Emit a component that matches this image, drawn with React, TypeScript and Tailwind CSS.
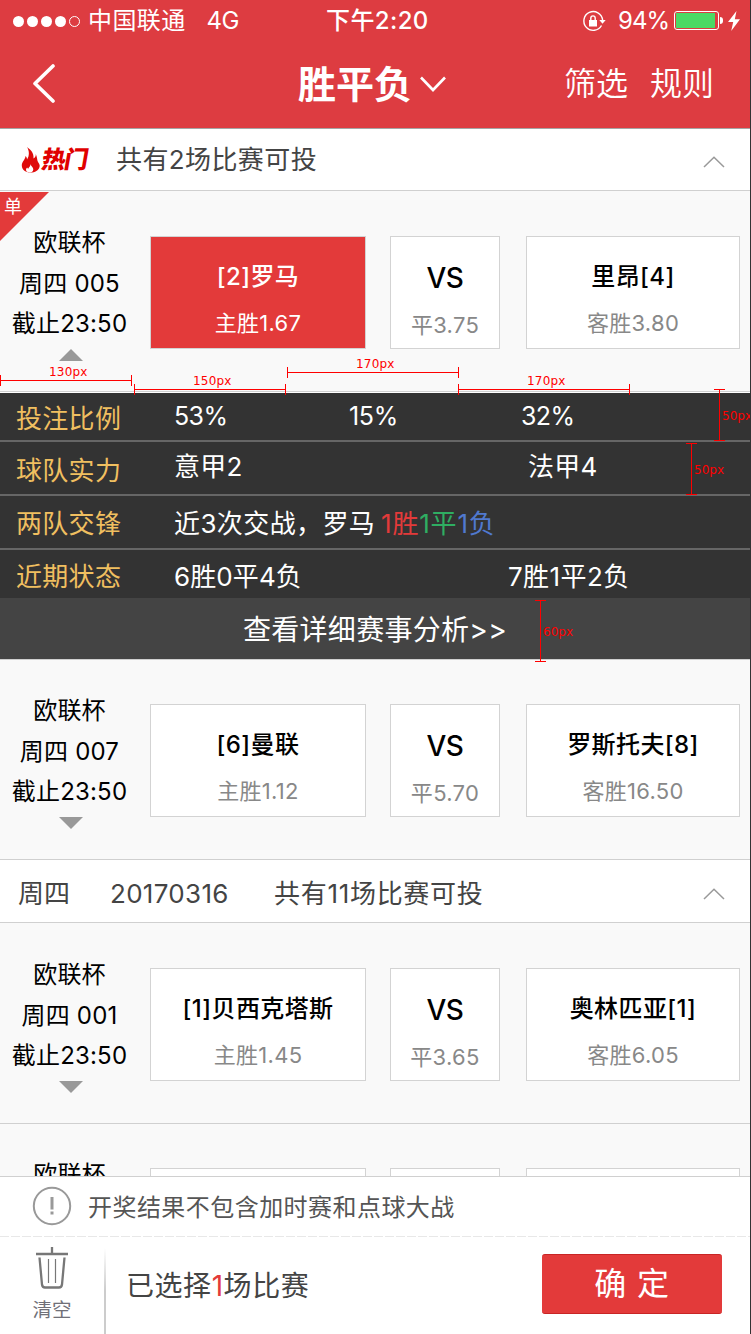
import type { ReactNode } from "react";

type Match = {
  league: string;
  code?: string;
  deadline?: string;
  home?: string;
  homeOdds?: string;
  draw?: string;
  away?: string;
  awayOdds?: string;
  open?: boolean;
  single?: boolean;
};

const hotOpen: Match = { league: "欧联杯", code: "周四 005", deadline: "截止23:50", home: "[2]罗马", homeOdds: "主胜1.67", draw: "平3.75", away: "里昂[4]", awayOdds: "客胜3.80", open: true, single: true };
const hotSecond: Match = { league: "欧联杯", code: "周四 007", deadline: "截止23:50", home: "[6]曼联", homeOdds: "主胜1.12", draw: "平5.70", away: "罗斯托夫[8]", awayOdds: "客胜16.50" };
const thursdayFirst: Match = { league: "欧联杯", code: "周四 001", deadline: "截止23:50", home: "[1]贝西克塔斯", homeOdds: "主胜1.45", draw: "平3.65", away: "奥林匹亚[1]", awayOdds: "客胜6.05" };
const thursdaySecond: Match = { league: "欧联杯" };

function StatusBar() {
  return (
    <div className="grid h-10 grid-cols-[326px_254px_1fr] items-center text-[24px] leading-10">
      <div className="flex items-center pl-[13px]">
        <div className="flex gap-[3px] pt-px">
          <i className="size-[11px] rounded-full bg-white" />
          <i className="size-[11px] rounded-full bg-white" />
          <i className="size-[11px] rounded-full bg-white" />
          <i className="size-[11px] rounded-full bg-white" />
          <i className="size-[11px] rounded-full border border-white" />
        </div>
        <span className="ml-[8px] pt-px tracking-[0.4px]">中国联通</span>
        <span className="ml-[21px] pt-px tracking-[-0.6px]">4G</span>
      </div>
      <div className="pt-px font-medium tracking-[0.4px]">下午2:20</div>
      <div className="flex items-center">
        <svg className="ml-[2px] h-6 w-6" viewBox="0 0 24 24" fill="none" stroke="white" strokeWidth="1.4">
          <path d="M19.500 16.500A9.400 9.400 0 1 1 20.600 11" />
          <path d="M17.300 11h6.400l-3.200 3.800z" fill="white" stroke="none" />
          <rect x="7" y="11" width="8" height="6.500" fill="white" stroke="none" />
          <path d="M8.800 11.500V9.100a2.200 2.200 0 0 1 4.400 0v2.400" />
        </svg>
        <span className="ml-[12px] w-[50px] pt-px tracking-[-1px]">94%</span>
        <div className="ml-[6px] h-[19px] w-[45px] shrink-0 rounded-[3px] border border-white p-px">
          <div className="h-full w-[39px] bg-[#4cd964]" />
        </div>
        <i className="ml-px h-[7px] w-[3px] rounded-r-full bg-white" />
        <svg className="ml-[5px] h-5 w-3" viewBox="0 0 12 20" fill="white">
          <path d="M8.500 0 0 11h5.200L3.200 20 12 8.300H6.800z" />
        </svg>
      </div>
    </div>
  );
}

function Header() {
  return (
    <header className="h-[129px] border-b border-[#a5a5a5] bg-[#dd3c41] text-white">
      <StatusBar />
      <div className="flex h-[88px] items-center">
        <svg className="ml-[32px] h-10 w-6" viewBox="0 0 24 40" fill="none" stroke="white" strokeWidth="3.600" strokeLinecap="round" strokeLinejoin="round">
          <path d="M21 2 3 19.500 21 37" />
        </svg>
        <h1 className="ml-[242px] text-[38px] leading-[88px] font-bold">胜平负</h1>
        <svg className="ml-[8px] h-4 w-[26px]" viewBox="0 0 26 16" fill="none" stroke="white" strokeWidth="2.600">
          <path d="M1 1.500 13 14 25 1.500" />
        </svg>
        <span className="ml-[118px] text-[32px] font-[350]">筛选</span>
        <span className="ml-[22px] text-[32px] font-[350]">规则</span>
      </div>
    </header>
  );
}

function Chevron({ shift }: { shift: string }) {
  return (
    <svg className={`mr-[25px] ml-auto h-3 w-[22px] ${shift}`} viewBox="0 0 22 12" fill="none" stroke="#999" strokeWidth="1.500">
      <path d="M1 11 11 1.200 21 11" />
    </svg>
  );
}

function Pick({ width, name, odds, selected, draw }: { width: string; name?: string; odds?: string; selected?: boolean; draw?: boolean }) {
  return (
    <div className={`${width} h-[113px] shrink-0 border border-[#d3d3d3] text-center whitespace-nowrap ${selected ? "bg-[#e33a3a] text-white" : "bg-white text-black"}`}>
      <div className={`h-[42px] leading-[42px] font-medium ${draw ? "mt-[20px] text-[28px] tracking-[-0.5px]" : "mt-[19px] text-[24px] tracking-[0.4px]"}`}>{name}</div>
      <div className={`text-[22px] leading-[44px] tracking-[0.3px] ${draw ? "mt-[4px]" : "mt-[3px]"} ${selected ? "" : "text-[#888]"}`}>{odds}</div>
    </div>
  );
}

function MatchRow({ match, line }: { match: Match; line?: boolean }) {
  return (
    <section className={`relative flex h-[200px] shrink-0 bg-[#f9f9f9] ${line ? "border-t border-[#d0d0d0] pt-[44px]" : "pt-[45px]"}`}>
      {match.single && (
        <div className="absolute top-px left-0 h-[49px] w-[49px] bg-[#e33a3a] text-white [clip-path:polygon(0_0,100%_0,0_100%)]">
          <span className="block pl-[4px] text-[18px] leading-[29px]">单</span>
        </div>
      )}
      <div className="-mt-[13px] flex w-[139px] flex-col items-center text-[24px] leading-[40.7px] tracking-[0.2px] whitespace-nowrap text-black">
        <div>{match.league}</div>
        {match.code && <div>{match.code}</div>}
        {match.deadline && <div>{match.deadline}</div>}
        {match.deadline && (
          <svg className={`mt-[4px] ml-[3px] h-3 w-6 ${match.open ? "" : "rotate-180"}`} viewBox="0 0 24 12" fill="#999">
            <path d="M12 0 24 12H0z" />
          </svg>
        )}
      </div>
      <div className="ml-[11px] flex gap-[24px]">
        <Pick width="w-[216px]" name={match.home} odds={match.homeOdds} selected={match.open} />
        <Pick width="w-[110px]" name={match.draw && "VS"} odds={match.draw} draw />
        <div className="ml-[2px]">
          <Pick width="w-[214px]" name={match.away} odds={match.awayOdds} />
        </div>
      </div>
    </section>
  );
}

function StatRow({ label, size, children }: { label: string; size: string; children: ReactNode }) {
  return (
    <div className={`${size} flex items-center border-[#666] pl-4 text-[26px] leading-[44px] whitespace-nowrap`}>
      <div className="w-[158px] shrink-0 tracking-[0.3px] text-[#f0bf60]">{label}</div>
      {children}
    </div>
  );
}

function Analysis() {
  return (
    <div className="shrink-0 border-t border-[#d0d0d0] bg-[#333] text-white">
      <div className="h-px bg-white" />
      <StatRow label="投注比例" size="h-[49px] border-b-2 pt-[4px]">
        <span className="-mt-[5px] w-[175px] text-[25px] tracking-[-0.600px]">53%</span>
        <span className="-mt-[5px] w-[172px] text-[25px] tracking-[-0.300px]">15%</span>
        <span className="-mt-[5px] text-[25px] tracking-[-0.600px]">32%</span>
      </StatRow>
      <StatRow label="球队实力" size="h-[54px] border-b-2 pt-[5px]">
        <span className="-mt-[7px] w-[354px] tracking-[0.200px]">意甲2</span>
        <span className="-mt-[7px] tracking-[0.200px]">法甲4</span>
      </StatRow>
      <StatRow label="两队交锋" size="h-[54px] border-b-2 pt-[3px]">
        <span className="w-[207px] tracking-[0.4px]">近3次交战，罗马</span>
        <span className="mt-px tracking-[0.8px] text-[#e33a3a]">1胜</span>
        <span className="mt-px tracking-[0.8px] text-[#2fae62]">1平</span>
        <span className="mt-px tracking-[0.8px] text-[#5079cf]">1负</span>
      </StatRow>
      <StatRow label="近期状态" size="h-[48px] pt-[5px]">
        <span className="w-[334px] tracking-[0.1px]">6胜0平4负</span>
        <span className="tracking-[0.4px]">7胜1平2负</span>
      </StatRow>
      <div className="h-[61px] bg-[#444] pt-[2px] text-center text-[28px] leading-[61px] tracking-[0.3px]">查看详细赛事分析&gt;&gt;</div>
    </div>
  );
}

function HMeasure({ place, label, labelPlace }: { place: string; label: string; labelPlace: string }) {
  return (
    <div className={`absolute flex h-[11px] items-center border-x border-[#f00] ${place}`}>
      <div className="h-px w-full bg-[#f00]" />
      <span className={`absolute -top-[10px] font-['DejaVu_Sans'] text-[12px] leading-[14px] tracking-[0.2px] text-[#f00] ${labelPlace}`}>{label}</span>
    </div>
  );
}

function VMeasure({ place, label }: { place: string; label: string }) {
  return (
    <div className={`absolute flex w-[11px] justify-center border-y border-[#f00] ${place}`}>
      <div className="h-full w-px bg-[#f00]" />
      <span className="absolute top-1/2 left-[8px] -mt-[6px] font-['DejaVu_Sans'] text-[12px] leading-[14px] text-[#f00]">{label}</span>
    </div>
  );
}

function Footer() {
  return (
    <footer className="flex h-[158px] shrink-0 flex-col border-t border-[#d0d0d0] bg-white text-[#555]">
      <div className="flex h-[59px] items-center">
        <svg className="-mt-px ml-[32px] h-10 w-10" viewBox="0 0 40 40" fill="none" stroke="#999" strokeWidth="2">
          <circle cx="20" cy="20" r="18.200" />
          <path d="M20 11v12.500M20 25.500v3" strokeWidth="3" />
        </svg>
        <p className="ml-[16px] pt-[3px] text-[24px] tracking-[0.450px]">开奖结果不包含加时赛和点球大战</p>
      </div>
      <div className="h-px bg-[repeating-linear-gradient(90deg,#e8e8e8_0_9px,#fff_9px_11px)]" />
      <div className="flex h-[97px] items-center">
        <div className="flex w-[104px] flex-col items-center">
          <svg className="h-[42px] w-8" viewBox="0 0 32 42" fill="none" stroke="#777">
            <path d="M0 7h32M16 0v7" strokeWidth="2.300" />
            <path d="M3.500 10.500 6 37.500q.4 3 3 3h14q2.600 0 3-3L28.500 10.500" strokeWidth="2.300" />
            <path d="M12.500 12v24M19.500 12v24" strokeWidth="1.200" />
          </svg>
          <span className="mt-[7px] text-[19.500px] leading-[28px] text-[#707078]">清空</span>
        </div>
        <div className="mt-[11px] h-[86px] w-[2px] bg-linear-to-b from-white via-[#ccc] to-[#ccc]" />
        <p className="ml-[20px] w-[416px] text-[28px] tracking-[0.550px] text-[#444]">
          已选择<span className="text-[#e33a3a]">1</span>场比赛
        </p>
        <button className="-mt-[4px] h-[60px] w-[180px] rounded-[3px] border-y border-[#c82525] bg-[#e33a3a] text-[32px] leading-[58px] tracking-[0.800px] text-white">确 定</button>
      </div>
    </footer>
  );
}

export default function App() {
  return (
    <div className="relative h-[1334px] w-[751px] overflow-hidden border-r border-[#333] bg-[#f9f9f9] font-['Inter','Noto_Sans_CJK_SC',sans-serif] font-normal">
      <div className="flex h-full flex-col">
        <Header />
        <main className="flex min-h-0 flex-1 flex-col overflow-hidden">
          <div className="flex h-[62px] shrink-0 items-center border-b border-[#d0d0d0] bg-white text-[26px] text-[#444]">
            <svg className="ml-[21px] h-[26px] w-5" viewBox="0 0 20 26">
              <path d="M6 0c4 3 7 6 6.500 11.500C14 10.500 15 9 14.800 7c1.500 3.500 1.200 6 2.200 8 1.500 2.500 2 3 1.500 5-.8 3.500-4.500 5.500-9 5.500S.8 23 .8 18.500c0-4 3.400-5.500 3.700-9.500 1 1 1.500 2 1.500 3.500C8.500 9 8.500 4 6 0Z" fill="#df0a0a" />
              <path d="M9.500 17c.3 2 3 3.500 2.800 5.500-.2 2-1.500 3-3.500 3S5 24.500 5 22.800c0-1 .5-1.500 1.200-2.300.2.800.6 1 1.200 1.300C7.500 20 9.800 19.500 9.500 17Z" fill="#fff" />
            </svg>
            <b className="mt-px inline-block w-[75px] -skew-x-10 pl-px text-[24px] font-black tracking-[-1.500px] text-[#e00000]">热门</b>
            <span className="tracking-[0.400px]">共有2场比赛可投</span>
            <Chevron shift="mt-[5px]" />
          </div>
          <MatchRow match={hotOpen} />
          <Analysis />
          <MatchRow match={hotSecond} line />
          <div className="flex h-16 shrink-0 items-center border-y border-[#d0d0d0] bg-white pl-[18px] pt-[4px] text-[26px] text-[#444]">
            <span className="w-[92px]">周四</span>
            <span className="w-[164px] tracking-[0.300px]">20170316</span>
            <span className="tracking-[0.700px]">共有11场比赛可投</span>
            <Chevron shift="mt-px" />
          </div>
          <MatchRow match={thursdayFirst} />
          <MatchRow match={thursdaySecond} line />
        </main>
        <Footer />
      </div>
      <HMeasure place="top-[375px] left-0 w-[132px]" label="130px" labelPlace="left-[48px]" />
      <HMeasure place="top-[384px] left-[134px] w-[152px]" label="150px" labelPlace="left-[58px]" />
      <HMeasure place="top-[367px] left-[287px] w-[172px]" label="170px" labelPlace="left-[68px]" />
      <HMeasure place="top-[384px] left-[458px] w-[172px]" label="170px" labelPlace="left-[68px]" />
      <VMeasure place="top-[389px] left-[714px] h-[52px]" label="50px" />
      <VMeasure place="top-[443px] left-[686px] h-[52px]" label="50px" />
      <VMeasure place="top-[600px] left-[535px] h-[62px]" label="60px" />
    </div>
  );
}
